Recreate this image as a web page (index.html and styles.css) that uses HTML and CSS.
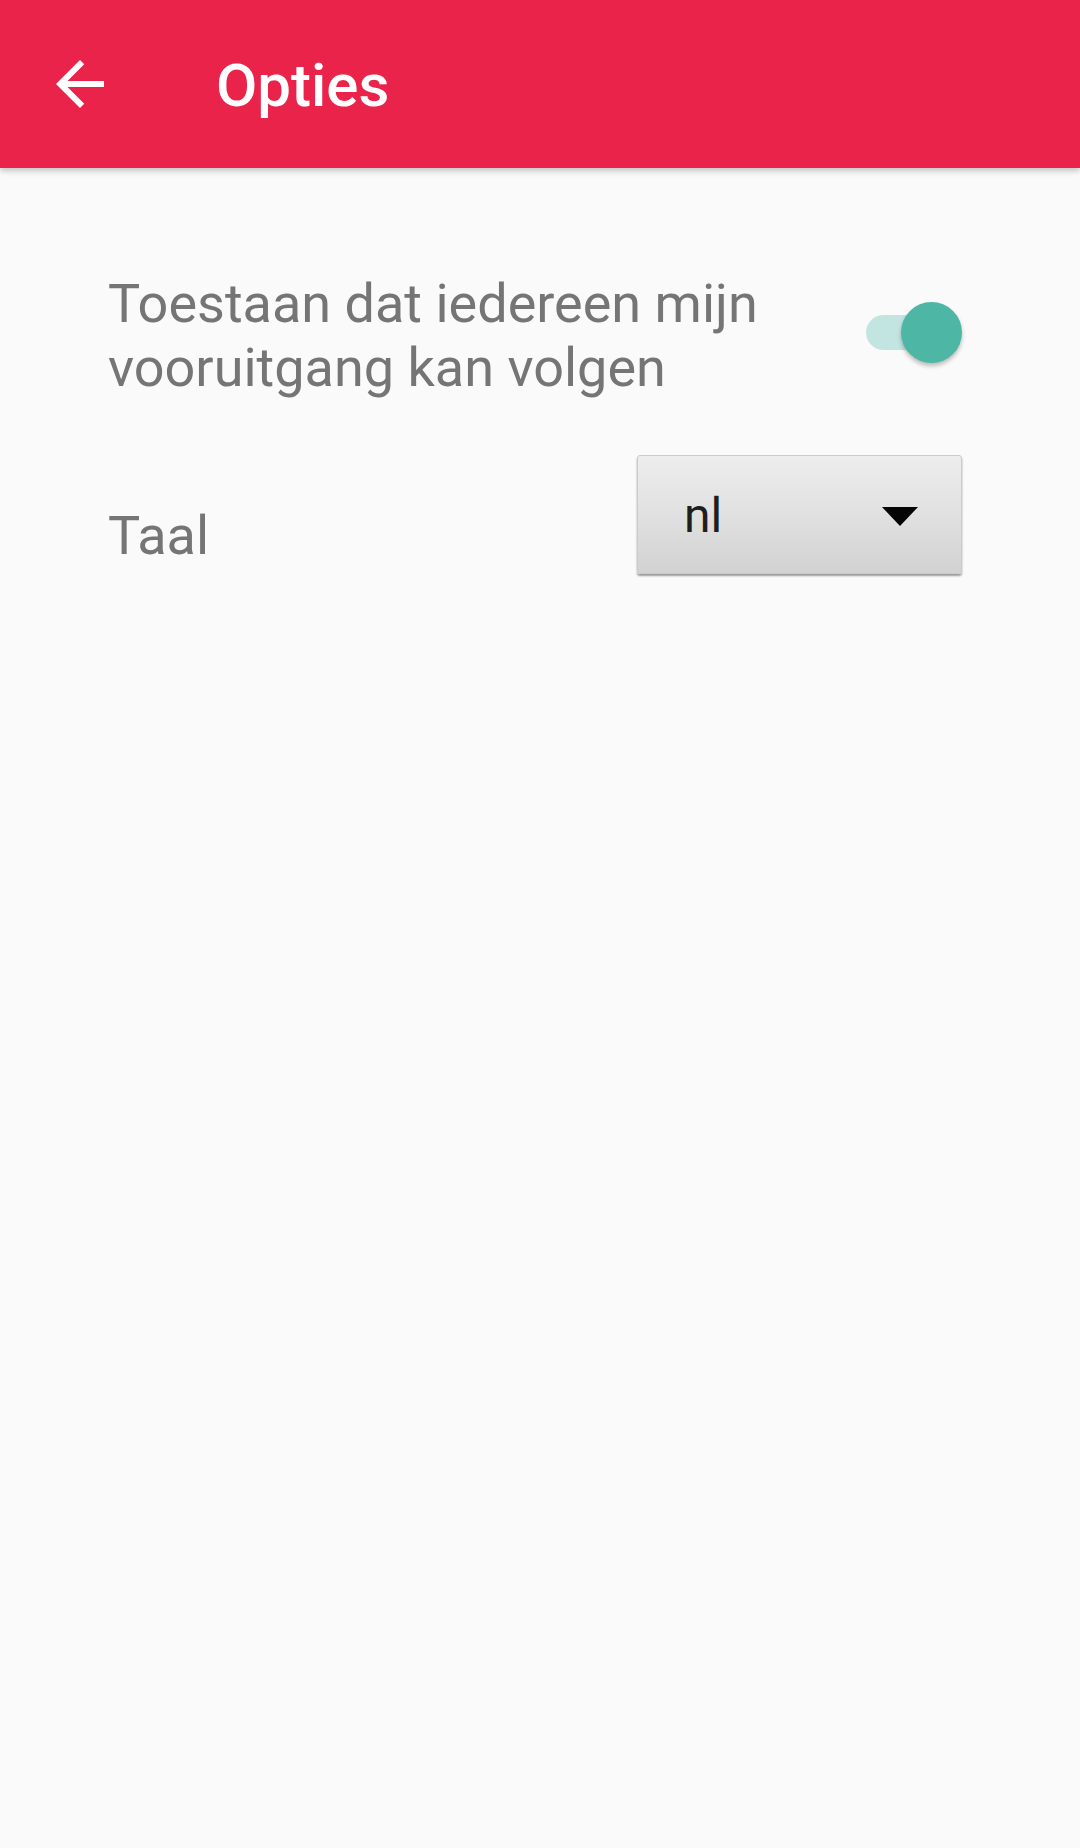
FILE: index.html
```html
<!DOCTYPE html>
<html lang="nl">
<head>
<meta charset="utf-8">
<title>Opties</title>
<link rel="stylesheet" href="styles.css">
</head>
<body>
<header class="toolbar">
  <svg class="back" viewBox="0 0 24 24" width="72" height="72" aria-label="Terug">
    <path d="M20 11H7.83l5.590-5.59L12 4l-8 8 8 8 1.41-1.41L7.83 13H20v-2z" fill="#ffffff"/>
  </svg>
  <h1 class="title">Opties</h1>
</header>
<main class="content">
  <div class="row row-switch">
    <p class="label label-wrap">Toestaan dat iedereen mijn vooruitgang kan volgen</p>
    <div class="switch" role="switch" aria-checked="true">
      <span class="track"></span>
      <span class="thumb"></span>
    </div>
  </div>
  <div class="row row-lang">
    <p class="label label-lang">Taal</p>
    <div class="spinner">
      <span class="spinner-value">nl</span>
      <span class="caret"></span>
    </div>
  </div>
</main>
</body>
</html>
```

FILE: styles.css
```css
html, body {
  margin: 0;
  padding: 0;
}
body {
  width: 1080px;
  min-height: 1848px;
  background: #fafafa;
  font-family: Roboto, "Noto Sans", sans-serif;
}
.toolbar {
  position: relative;
  z-index: 1;
  height: 168px;
  background: #e92349;
  display: flex;
  align-items: center;
  padding-left: 44px;
  box-sizing: border-box;
  box-shadow: 0 3px 6px rgba(0, 0, 0, 0.22);
}
.back {
  display: block;
  flex: none;
}
.title {
  margin: 4px 0 0 100px;
  font-size: 60px;
  line-height: 70px;
  font-weight: 500;
  color: #ffffff;
}
.content {
  padding: 104px 118px 0 108px;
}
.row {
  display: flex;
  justify-content: space-between;
}
.row-switch {
  align-items: center;
}
.label {
  margin: 0;
  font-size: 54px;
  line-height: 64px;
  color: #757575;
}
.label-wrap {
  width: 700px;
}
.switch {
  position: relative;
  width: 96px;
  height: 61px;
  margin-bottom: 8px;
  flex: none;
}
.track {
  position: absolute;
  left: 0;
  right: 4px;
  top: 13px;
  height: 35px;
  border-radius: 18px;
  background: #c3e5e1;
}
.thumb {
  position: absolute;
  right: 0;
  top: 0;
  width: 61px;
  height: 61px;
  border-radius: 50%;
  background: #4db6a5;
  box-shadow: 0 3px 4px rgba(0, 0, 0, 0.25);
}
.row-lang {
  margin-top: 55px;
  align-items: flex-end;
}
.label-lang {
  margin-bottom: 6px;
}
.spinner {
  width: 325px;
  height: 119px;
  box-sizing: border-box;
  display: flex;
  align-items: center;
  justify-content: space-between;
  padding: 2px 43px 0 46px;
  background: linear-gradient(to bottom, #ededed 0%, #e2e2e2 45%, #d2d2d2 100%);
  border: 1px solid #cbcbcb;
  border-radius: 3px;
  box-shadow: 0 2px 2px rgba(0, 0, 0, 0.38);
}
.spinner-value {
  font-size: 48px;
  line-height: 56px;
  color: #1e1e1e;
}
.caret {
  width: 0;
  height: 0;
  margin-top: 2px;
  border-left: 18px solid transparent;
  border-right: 18px solid transparent;
  border-top: 19px solid #050505;
}
```
